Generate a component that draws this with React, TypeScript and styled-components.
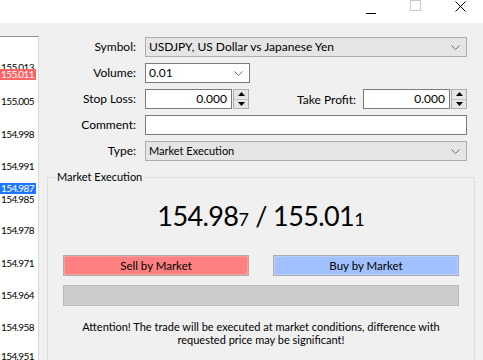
import styled, { createGlobalStyle } from 'styled-components';

const GlobalStyle = createGlobalStyle`
  html, body {
    margin: 0;
    padding: 0;
    background: #f0f0f0;
  }
  body {
    font-family: Lato, 'Liberation Sans', sans-serif;
    font-size: 12px;
    color: #000;
  }
`;

interface AxisLabel {
  price: string;
  y: number;
  mark?: 'ask' | 'bid';
}

const axisLabels: AxisLabel[] = [
  { price: '155.013', y: 67 },
  { price: '155.011', y: 74, mark: 'ask' },
  { price: '155.005', y: 101 },
  { price: '154.998', y: 134 },
  { price: '154.991', y: 166 },
  { price: '154.987', y: 188, mark: 'bid' },
  { price: '154.985', y: 199 },
  { price: '154.978', y: 230 },
  { price: '154.971', y: 263 },
  { price: '154.964', y: 295 },
  { price: '154.958', y: 327 },
  { price: '154.951', y: 356 },
];

const Window = styled.div`
  width: 483px;
  height: 360px;
  display: flex;
  flex-direction: column;
  overflow: hidden;
  background: #f0f0f0;
`;

const TitleBar = styled.div`
  height: 23px;
  flex: none;
  background: #fff;
  display: flex;
  justify-content: flex-end;
`;

const CaptionButton = styled.div`
  width: 45px;
  height: 23px;
  display: flex;
  justify-content: center;
  align-items: flex-start;
`;

const Body = styled.div`
  flex: 1;
  margin-top: 13px;
  display: flex;
  min-height: 0;
`;

const Chart = styled.div`
  position: relative;
  width: 38px;
  flex: none;
  background: #fff;
  border-top: 1px solid #8f8f8f;
  border-right: 1px solid #d9d9d9;
  overflow: hidden;
`;

const Tick = styled.div<{ $mark?: 'ask' | 'bid' }>`
  position: absolute;
  left: 0;
  width: 36px;
  height: 11px;
  line-height: 11px;
  padding-left: 1px;
  box-sizing: border-box;
  font-size: 10px;
  letter-spacing: -0.6px;
  white-space: nowrap;
  color: ${(p) => (p.$mark ? '#fff' : '#000')};
  background: ${(p) =>
    p.$mark === 'ask' ? '#ff6464' : p.$mark === 'bid' ? '#1e78ff' : 'transparent'};
`;

const Form = styled.div`
  flex: 1;
  display: flex;
  flex-direction: column;
  padding-top: 1px;
`;

const Fields = styled.div`
  display: grid;
  grid-template-columns: 97px 1fr;
  column-gap: 9px;
  row-gap: 6px;
  padding-right: 16px;
`;

const Label = styled.div`
  height: 20px;
  line-height: 20px;
  text-align: right;
  white-space: nowrap;
`;

const Combo = styled.div<{ $flat?: boolean; $width?: number }>`
  height: 20px;
  box-sizing: border-box;
  width: ${(p) => (p.$width ? `${p.$width}px` : 'auto')};
  border: 1px solid ${(p) => (p.$flat ? '#adadad' : '#7a7a7a')};
  background: ${(p) => (p.$flat ? '#e5e5e5' : '#fff')};
  display: flex;
  align-items: center;
  padding: 0 6px 0 3px;
  line-height: 18px;
  white-space: nowrap;
`;

const ComboText = styled.span<{ $tight?: boolean }>`
  flex: 1;
  font-size: ${(p) => (p.$tight ? '11px' : '12px')};
`;

const Row = styled.div`
  display: flex;
  align-items: center;
  height: 20px;
`;

const SpinField = styled.div`
  display: flex;
  width: 104px;
  height: 20px;
`;

const NumberBox = styled.div`
  flex: 1;
  box-sizing: border-box;
  border: 1px solid #7a7a7a;
  background: #fff;
  text-align: right;
  line-height: 18px;
  padding-right: 4px;
`;

const Spinner = styled.div`
  width: 16px;
  margin-left: 1px;
  box-sizing: border-box;
  border: 1px solid #adadad;
  background: #e5e5e5;
  display: flex;
  flex-direction: column;
`;

const SpinHalf = styled.div<{ $down?: boolean }>`
  flex: 1;
  display: flex;
  align-items: center;
  justify-content: center;
  border-top: ${(p) => (p.$down ? '1px solid #c4c4c4' : 'none')};
`;

const SideLabel = styled.div`
  margin-left: auto;
  margin-right: 7px;
  white-space: nowrap;
`;

const TextBox = styled.div`
  height: 20px;
  box-sizing: border-box;
  border: 1px solid #7a7a7a;
  background: #fff;
`;

const Group = styled.fieldset`
  margin: 9px 8px 0 8px;
  padding: 0 15px 40px;
  border: 1px solid #dcdcdc;
  min-width: 0;
  display: flex;
  flex-direction: column;
`;

const Legend = styled.legend`
  margin-left: -8px;
  padding: 0 2px;
  line-height: 14px;
  font-size: 11px;
  color: #000;
`;

const Quote = styled.div`
  margin-top: 16px;
  text-align: center;
  font-size: 27px;
  letter-spacing: -0.6px;
  line-height: 32px;
  white-space: nowrap;
`;

const Pip = styled.span`
  font-size: 18px;
  letter-spacing: 0;
`;

const Actions = styled.div`
  margin-top: 20px;
  display: grid;
  grid-template-columns: 1fr 1fr;
  column-gap: 24px;
`;

const TradeButton = styled.div<{ $side: 'sell' | 'buy' }>`
  height: 21px;
  box-sizing: border-box;
  border: 1px solid #adadad;
  box-shadow: inset 0 0 0 1px ${(p) => (p.$side === 'sell' ? '#ff9c9c' : '#b8d0ff')};
  background: ${(p) => (p.$side === 'sell' ? '#ff8080' : '#a0c0ff')};
  text-align: center;
  font-size: 11.5px;
  line-height: 19px;
`;

const Progress = styled.div`
  margin-top: 9px;
  height: 21px;
  box-sizing: border-box;
  border: 1px solid #bcbcbc;
  background: #cccccc;
`;

const Note = styled.div`
  margin-top: 14px;
  text-align: center;
  font-size: 11px;
  line-height: 13px;
  white-space: nowrap;
`;

const Chevron = () => (
  <svg width="9" height="5" viewBox="0 0 9 5">
    <polyline points="0.5,0.5 4.5,4.5 8.5,0.5" fill="none" stroke="#6d6d6d" strokeWidth="1" />
  </svg>
);

const Arrow = ({ down }: { down?: boolean }) => (
  <svg width="7" height="4" viewBox="0 0 7 4">
    <polygon points={down ? '0,0 7,0 3.5,4' : '3.5,0 7,4 0,4'} fill="#000" />
  </svg>
);

function Spin({ value }: { value: string }) {
  return (
    <SpinField>
      <NumberBox>{value}</NumberBox>
      <Spinner>
        <SpinHalf>
          <Arrow />
        </SpinHalf>
        <SpinHalf $down>
          <Arrow down />
        </SpinHalf>
      </Spinner>
    </SpinField>
  );
}

export default function App() {
  return (
    <>
      <GlobalStyle />
      <Window>
        <TitleBar>
          <CaptionButton>
            <svg width="10" height="14" viewBox="0 0 10 14">
              <line x1="0" y1="13.5" x2="10" y2="13.5" stroke="#000" strokeWidth="1" />
            </svg>
          </CaptionButton>
          <CaptionButton>
            <svg width="11" height="12" viewBox="0 0 11 12">
              <rect x="0.5" y="0.5" width="10" height="10" fill="none" stroke="#c8c8c8" strokeWidth="1" />
            </svg>
          </CaptionButton>
          <CaptionButton>
            <svg width="11" height="12" viewBox="0 0 11 12">
              <path d="M0.5 1.5 L10.5 11.5 M10.5 1.5 L0.5 11.5" stroke="#000" strokeWidth="1" />
            </svg>
          </CaptionButton>
        </TitleBar>
        <Body>
          <Chart>
            {axisLabels.map((l) => (
              <Tick key={l.price} $mark={l.mark} style={{ top: l.y - 37 - 5 }}>
                {l.price}
              </Tick>
            ))}
          </Chart>
          <Form>
            <Fields>
              <Label>Symbol:</Label>
              <Combo $flat>
                <ComboText>USDJPY, US Dollar vs Japanese Yen</ComboText>
                <Chevron />
              </Combo>

              <Label>Volume:</Label>
              <Row>
                <Combo $width={105}>
                  <ComboText>0.01</ComboText>
                  <Chevron />
                </Combo>
              </Row>

              <Label>Stop Loss:</Label>
              <Row>
                <Spin value="0.000" />
                <SideLabel>Take Profit:</SideLabel>
                <Spin value="0.000" />
              </Row>

              <Label>Comment:</Label>
              <TextBox />

              <Label>Type:</Label>
              <Combo $flat>
                <ComboText $tight>Market Execution</ComboText>
                <Chevron />
              </Combo>
            </Fields>

            <Group>
              <Legend>Market Execution</Legend>
              <Quote>
                154.98<Pip>7</Pip> / 155.01<Pip>1</Pip>
              </Quote>
              <Actions>
                <TradeButton $side="sell">Sell by Market</TradeButton>
                <TradeButton $side="buy">Buy by Market</TradeButton>
              </Actions>
              <Progress />
              <Note>
                Attention! The trade will be executed at market conditions, difference with
                <br />
                requested price may be significant!
              </Note>
            </Group>
          </Form>
        </Body>
      </Window>
    </>
  );
}
